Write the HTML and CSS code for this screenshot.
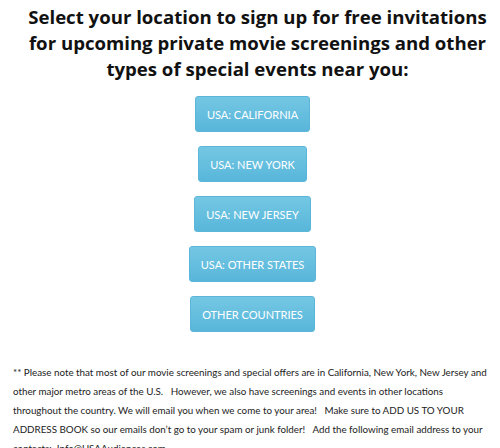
FILE: index.html
```
<!DOCTYPE html>
<html>
<head>
<meta charset="utf-8">
<link rel="stylesheet" href="styles.css">
</head>
<body>
<div class="page">
  <h1 class="title">Select your location to sign up for free invitations for upcoming private movie screenings and other types of special events near you:</h1>
  <div class="buttons">
    <a class="btn" href="#">USA: CALIFORNIA</a>
    <a class="btn" href="#">USA: NEW YORK</a>
    <a class="btn" href="#">USA: NEW JERSEY</a>
    <a class="btn" href="#">USA: OTHER STATES</a>
    <a class="btn" href="#">OTHER COUNTRIES</a>
  </div>
  <p class="note">** Please note that most of our movie screenings and special offers are in California, New York, New Jersey and other major metro areas of the U.S. &nbsp; However, we also have screenings and events in other locations throughout the country. We will email you when we come to your area! &nbsp; Make sure to ADD US TO YOUR ADDRESS BOOK so our emails don’t go to your spam or junk folder! &nbsp; Add the following email address to your contacts: &nbsp;<span class="mail">Info@USAAudiences.com</span></p>
</div>
</body>
</html>
```
FILE: styles.css
```
html, body {
  margin: 0;
  padding: 0;
  background: #ffffff;
}
.page {
  width: 500px;
  padding: 0 8px 0 13px;
  box-sizing: border-box;
}
.title {
  font-family: "Open Sans", sans-serif;
  font-weight: 700;
  font-size: 18.6px;
  line-height: 26px;
  color: #111111;
  text-align: center;
  margin: 4px -6px 0 -8px;
  padding: 0 0 0 12px;
}
.buttons {
  display: flex;
  flex-direction: column;
  align-items: center;
  gap: 14px;
  margin-top: 14px;
}
.btn {
  display: block;
  font-family: Lato, sans-serif;
  font-size: 11px;
  color: #ffffff;
  text-decoration: none;
  padding: 0 11px;
  height: 36px;
  line-height: 36px;
  box-sizing: border-box;
  border: 1px solid #5bb6d9;
  border-radius: 3px;
  background: linear-gradient(#74c7e3, #58b6da);
}
.note {
  font-family: Lato, sans-serif;
  font-size: 9.8px;
  line-height: 19px;
  color: #222222;
  margin: 31px 0 0 0;
}
.mail {
  color: #222222;
}
```
